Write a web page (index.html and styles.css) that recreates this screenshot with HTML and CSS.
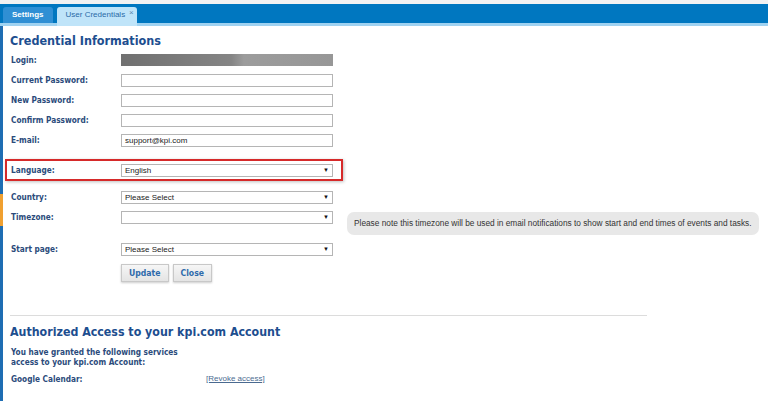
FILE: index.html
```html
<!DOCTYPE html>
<html lang="en">
<head>
    <meta charset="UTF-8">
    <meta name="viewport" content="width=device-width, initial-scale=1.0">
    <title>User Credentials</title>
    <link rel="stylesheet" href="styles.css">
</head>
<body>

    <div class="topbar">
        <div class="tab">Settings</div>
        <div class="tab active">User Credentials <span class="tab-close">&times;</span></div>
    </div>

    <div class="main">
        <div class="side-strip"><span class="handle"></span></div>

        <div class="content">
            <h1>Credential Informations</h1>

            <form id="credForm">
                <div class="row">
                    <label>Login:</label>
                    <div class="login-blur"></div>
                </div>
                <div class="row">
                    <label for="curPass">Current Password:</label>
                    <input type="password" id="curPass">
                </div>
                <div class="row">
                    <label for="newPass">New Password:</label>
                    <input type="password" id="newPass">
                </div>
                <div class="row">
                    <label for="confPass">Confirm Password:</label>
                    <input type="password" id="confPass">
                </div>
                <div class="row">
                    <label for="email">E-mail:</label>
                    <input type="text" id="email" value="support@kpi.com">
                </div>

                <div class="highlight">
                    <div class="row">
                        <label for="lang">Language:</label>
                        <div class="select"><span>English</span><i>&#9660;</i></div>
                    </div>
                </div>

                <div class="row first">
                    <label for="country">Country:</label>
                    <div class="select"><span>Please Select</span><i>&#9660;</i></div>
                </div>
                <div class="row">
                    <label for="tz">Timezone:</label>
                    <div class="select"><span></span><i>&#9660;</i></div>
                    <div class="note">Please note this timezone will be used in email notifications to show start and end times of events and tasks.</div>
                </div>
                <div class="row spaced">
                    <label for="start">Start page:</label>
                    <div class="select"><span>Please Select</span><i>&#9660;</i></div>
                </div>

                <div class="buttons">
                    <button type="button">Update</button>
                    <button type="button">Close</button>
                </div>
            </form>

            <hr>

            <h2>Authorized Access to your kpi.com Account</h2>
            <p class="granted">You have granted the following services<br>access to your kpi.com Account:</p>
            <div class="service">
                <span class="service-name">Google Calendar:</span>
                <a href="#">[Revoke access]</a>
            </div>
        </div>
    </div>

</body>
</html>
```

FILE: styles.css
```css
body {
    margin: 0;
    background: #fff;
    font-family: "DejaVu Sans Condensed", "DejaVu Sans", sans-serif;
    font-stretch: condensed;
    color: #2b4b7b;
    overflow: hidden;
}

.topbar {
    height: 19px;
    margin-top: 4px;
    background: #0077c0;
    border-bottom: 3px solid #9fd2f1;
    box-shadow: 0 -4px 0 #f2f2f2;
    display: flex;
    align-items: flex-end;
    gap: 4px;
    padding-left: 3px;
}

.tab {
    height: 16px;
    line-height: 16px;
    padding: 0 9px;
    background: #2f8fd4;
    color: #fff;
    font-family: "Liberation Sans", Arial, sans-serif;
    font-weight: bold;
    font-size: 8px;
    border-radius: 3px 3px 0 0;
}

.tab.active {
    width: 62px;
    height: 19px;
    margin-bottom: -3px;
    line-height: 16px;
    background: #bfe4f9;
    color: #2a6aa8;
    font-weight: normal;
    position: relative;
}

.tab-close {
    position: absolute;
    right: 3px;
    top: -2px;
    font-size: 8px;
    color: #5a86b0;
}

.main {
    display: flex;
    height: 375px;
}

.side-strip {
    width: 3px;
    background: #1e6db3;
    position: relative;
}

.handle {
    position: absolute;
    left: 0;
    top: 168px;
    width: 3px;
    height: 32px;
    background: #f0a030;
}

.content {
    padding: 6px 0 0 7px;
}

h1 {
    margin: 0;
    font-size: 12.5px;
    line-height: 18px;
    color: #1d4e8f;
}

.row {
    display: flex;
    align-items: center;
    height: 20px;
}

.row label {
    width: 111px;
    padding-left: 1px;
    box-sizing: border-box;
    font-weight: bold;
    font-size: 8.2px;
}

.row input,
.select,
.login-blur {
    width: 212px;
    height: 13px;
    box-sizing: border-box;
    border: 1px solid #b5b5b5;
    margin: 0;
    padding: 0 3px;
    font-family: "Liberation Sans", Arial, sans-serif;
    font-size: 8px;
    color: #222;
    background: #fff;
}

.login-blur {
    height: 12px;
    border: none;
    background: linear-gradient(to right, #707070, #858585 52%, #9c9c9c 58%, #979797);
    filter: blur(0.6px);
}

.select {
    position: relative;
    line-height: 11px;
}

.select i {
    position: absolute;
    right: 3px;
    top: 0;
    font-style: normal;
    font-size: 6px;
    color: #111;
}

.highlight {
    margin: 9px 0 0 -5px;
    padding-left: 3px;
    width: 331px;
    height: 18px;
    border: 2px solid #d62a2a;
    box-shadow: 1px 1px 3px rgba(0, 0, 0, 0.25);
    display: flex;
    align-items: center;
}

.row.first {
    margin-top: 6px;
}

.row.spaced {
    margin-top: 12px;
}

.note {
    align-self: flex-start;
    margin: 5px 0 0 14px;
    height: 23px;
    line-height: 23px;
    padding: 0 7px;
    background: #e8e8e8;
    border-radius: 7px;
    font-family: "Liberation Sans", Arial, sans-serif;
    font-stretch: normal;
    font-size: 8.3px;
    color: #333;
    white-space: nowrap;
}

.buttons {
    display: flex;
    gap: 4px;
    margin: 5px 0 0 111px;
}

button {
    height: 18px;
    padding: 0 7px;
    background: linear-gradient(#f6f6f6, #e4e4e4);
    border: 1px solid #c8c8c8;
    box-shadow: 0 1px 2px rgba(0, 0, 0, 0.2);
    font-family: inherit;
    font-stretch: condensed;
    font-weight: bold;
    font-size: 8.6px;
    color: #2e6aab;
}

hr {
    width: 637px;
    margin: 33px 0 0 0;
    border: none;
    border-top: 1px solid #dcdcdc;
}

h2 {
    margin: 7px 0 0 0;
    font-size: 12.3px;
    line-height: 18px;
    color: #1d4e8f;
}

.granted {
    margin: 6px 0 0 1px;
    font-size: 8.2px;
    font-weight: bold;
    line-height: 10px;
}

.service {
    display: flex;
    margin: 7px 0 0 1px;
    font-size: 8.2px;
}

.service-name {
    width: 195px;
    font-weight: bold;
}

.service a {
    color: #4a6a90;
    font-family: "Liberation Sans", Arial, sans-serif;
    font-size: 8px;
}
```
